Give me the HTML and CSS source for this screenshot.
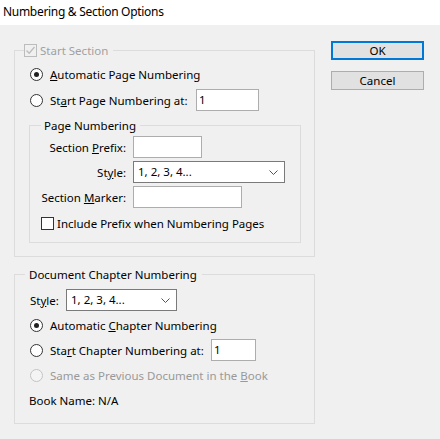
FILE: index.html
```html
<!DOCTYPE html>
<html>
<head>
<meta charset="utf-8">
<link rel="stylesheet" href="styles.css">
</head>
<body>
<div class="titlebar">Numbering &amp; Section Options</div>
<div class="main">
  <div class="left">
    <fieldset class="group outer">
      <legend class="legend-check">
        <span class="check disabled"><svg width="11" height="11" viewBox="0 0 11 11"><polyline points="1.5,5.5 4.2,8.2 9.5,2" fill="none" stroke="#bcbcbc" stroke-width="1.3"/></svg></span><span class="dim">Start Section</span>
      </legend>
      <div class="row first">
        <span class="radio checked"></span><span class="text"><u>A</u>utomatic Page Numbering</span>
      </div>
      <div class="row">
        <span class="radio"></span><span class="text lbl-page">St<u>a</u>rt Page Numbering at:</span><span class="field w-start">1</span>
      </div>
      <fieldset class="group inner">
        <legend class="legend-text">Page Numbering</legend>
        <div class="form-grid">
          <span class="flabel">Section <u>P</u>refix:</span><span class="field w-prefix"></span>
          <span class="flabel">St<u>y</u>le:</span><span class="field select w-style"><span>1, 2, 3, 4...</span><svg class="chev" width="9" height="5" viewBox="0 0 9 5"><polyline points="0.5,0.5 4.5,4.5 8.5,0.5" fill="none" stroke="#555" stroke-width="1"/></svg></span>
          <span class="flabel">Section <u>M</u>arker:</span><span class="field w-marker"></span>
        </div>
        <div class="check-row">
          <span class="check"></span><span class="text">Include Prefix when Numbering Pages</span>
        </div>
      </fieldset>
    </fieldset>

    <fieldset class="group chapter">
      <legend class="legend-text chap-legend">Document Chapter Numbering</legend>
      <div class="row style-row">
        <span class="slabel">St<u>y</u>le:</span><span class="field select w-cstyle"><span>1, 2, 3, 4...</span><svg class="chev" width="9" height="5" viewBox="0 0 9 5"><polyline points="0.5,0.5 4.5,4.5 8.5,0.5" fill="none" stroke="#555" stroke-width="1"/></svg></span>
      </div>
      <div class="row">
        <span class="radio checked"></span><span class="text">Automatic <u>C</u>hapter Numbering</span>
      </div>
      <div class="row">
        <span class="radio"></span><span class="text lbl-chap">Sta<u>r</u>t Chapter Numbering at:</span><span class="field w-cstart">1</span>
      </div>
      <div class="row">
        <span class="radio disabled"></span><span class="text dim2">Same as Previous Document in the <u>B</u>ook</span>
      </div>
      <div class="row">
        <span class="book">Book Name: N/A</span>
      </div>
    </fieldset>
  </div>
  <div class="buttons">
    <div class="btn default">OK</div>
    <div class="btn">Cancel</div>
  </div>
</div>
</body>
</html>
```
FILE: styles.css
```css
* { box-sizing: border-box; }
html, body { margin: 0; padding: 0; }
body {
  width: 440px;
  height: 439px;
  background: #f0f0f0;
  font-family: "Noto Sans", "Open Sans", sans-serif;
  font-size: 11.5px;
  letter-spacing: 0;
  color: #000;
  overflow: hidden;
}
u { text-decoration: underline; text-underline-offset: 1px; }

.titlebar {
  height: 25px;
  background: #fff;
  line-height: 24px;
  padding-left: 3px;
  font-size: 12px;
  letter-spacing: -0.3px;
  white-space: nowrap;
}

.main {
  display: flex;
  padding: 16px 0 0 14px;
}
.left {
  width: 301px;
  margin-top: 2px;
}

.group {
  margin: 0;
  border: 1px solid #dcdcdc;
  min-inline-size: 0;
}
.outer { padding: 5px 13px 13px 14px; }
.inner { padding: 3px 0 11px 0; margin-top: 7px; }
.chapter { padding: 7px 13px 12px 14px; margin-top: 10px; }

legend {
  height: 15px;
  line-height: 15px;
  white-space: nowrap;
}
.legend-check {
  display: flex;
  align-items: center;
  margin-left: -5px;
  padding: 0 5px 0 0;
}
.legend-text {
  margin-left: 11px;
  padding: 0 4px 0 3px;
}
.chap-legend { margin-left: -4px; padding: 0 5px 0 4px; }

.dim { color: #a0a0a0; margin-left: 3px; }
.dim2 { color: #999; }

.row {
  display: flex;
  align-items: center;
  height: 22px;
  margin-top: 3px;
  white-space: nowrap;
}
.outer .row.first { margin-top: 0; }
.outer .row + .row { margin-top: 4px; }
.chapter .row.style-row { margin-top: 0; margin-bottom: 2px; }

.radio {
  flex: none;
  width: 13px;
  height: 13px;
  margin-left: 1px;
  margin-right: 7px;
  border: 1px solid #333;
  border-radius: 50%;
  background: #fff;
  display: flex;
  align-items: center;
  justify-content: center;
}
.radio.checked::after {
  content: "";
  width: 5px;
  height: 5px;
  border-radius: 50%;
  background: #222;
}
.radio.disabled { border-color: #c4c4c4; background: #f4f4f4; }

.check {
  flex: none;
  width: 13px;
  height: 13px;
  border: 1px solid #333;
  background: #fff;
  display: flex;
  align-items: center;
  justify-content: center;
}
.check.disabled { border-color: #bcbcbc; background: #f0f0f0; }

.lbl-page { width: 146px; }
.lbl-chap { width: 161px; }

.field {
  flex: none;
  height: 22px;
  background: #fff;
  border: 1px solid #adadad;
  line-height: 20px;
  padding-left: 2px;
}
.w-start { width: 63px; }
.w-cstart { width: 45px; }
.w-prefix { width: 69px; }
.w-marker { width: 109px; }
.select {
  display: flex;
  align-items: center;
  justify-content: space-between;
  border-color: #7a7a7a;
  padding: 0 6px 0 4px;
}
.w-style { width: 152px; }
.w-cstyle { width: 111px; }
.chev { flex: none; }

.form-grid {
  display: grid;
  grid-template-columns: 96px auto;
  grid-auto-rows: 22px;
  column-gap: 7px;
  row-gap: 3px;
  justify-items: start;
  align-items: center;
}
.flabel { justify-self: end; white-space: nowrap; }

.check-row {
  display: flex;
  align-items: center;
  height: 15px;
  margin-top: 8px;
  padding-left: 11px;
  white-space: nowrap;
}
.check-row .check { margin-right: 3px; }

.slabel { width: 37px; padding-left: 1px; }
.book { padding-left: 0; }

.buttons {
  margin-left: 16px;
  width: 93px;
  display: flex;
  flex-direction: column;
  gap: 11px;
}
.btn {
  height: 19px;
  background: #e1e1e1;
  border: 1px solid #adadad;
  text-align: center;
  line-height: 17px;
}
.btn.default {
  border: 2px solid #0078d7;
  line-height: 15px;
}
```
